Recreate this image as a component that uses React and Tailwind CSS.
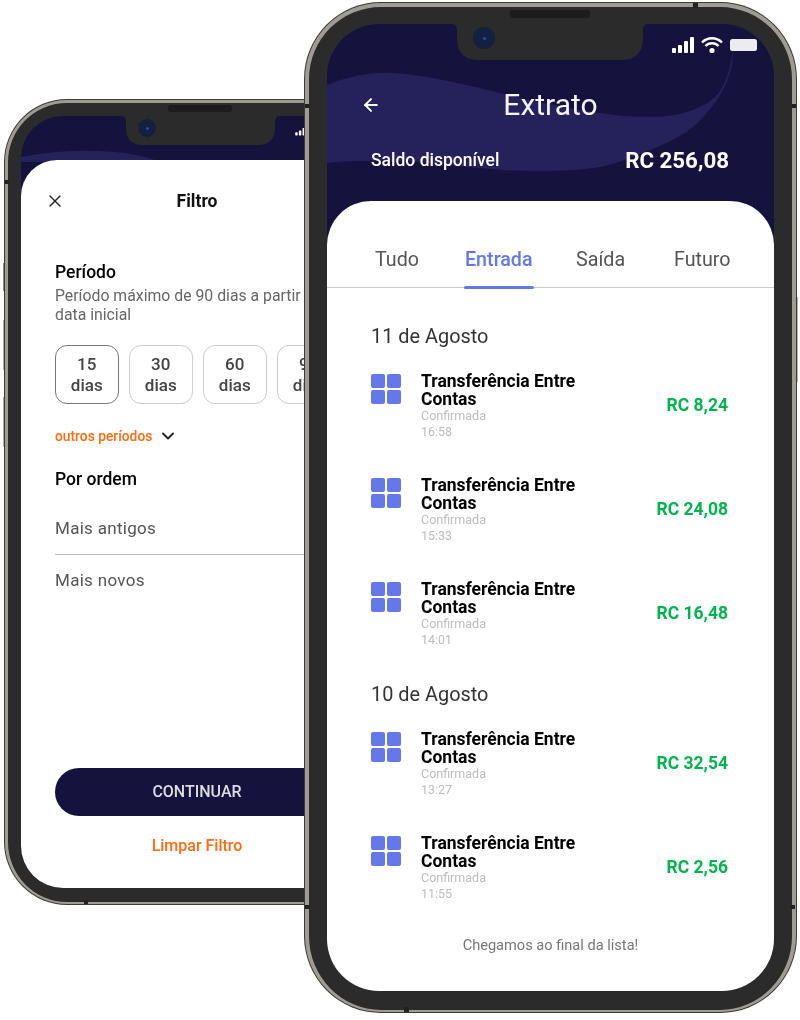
import React from "react";
import { ArrowLeft, X, ChevronDown } from "lucide-react";

function Grid() {
  return (
    <div className="grid grid-cols-2 gap-[2px] w-[30px] h-[30px] shrink-0 mt-[6px]">
      <span className="rounded-[2px] bg-[#6379ea]" />
      <span className="rounded-[2px] bg-[#6379ea]" />
      <span className="rounded-[2px] bg-[#6379ea]" />
      <span className="rounded-[2px] bg-[#6379ea]" />
    </div>
  );
}

function Row({ time, amount }) {
  return (
    <div className="flex h-[104px] pl-[44px] pr-[46px]">
      <Grid />
      <div className="ml-[20px] flex-1 pt-[4px]">
        <div className="text-[17.5px] leading-[18px] font-bold text-black w-[170px]">Transferência Entre Contas</div>
        <div className="text-[12.5px] leading-[16px] text-[#bdbdbd]">Confirmada</div>
        <div className="text-[12.5px] leading-[16px] text-[#bdbdbd]">{time}</div>
      </div>
      <div className="text-[17.5px] font-bold text-[#00b34f] pt-[27px] leading-[20px]">{amount}</div>
    </div>
  );
}

function Wave({ className, d, vb }) {
  return (
    <svg className={className} viewBox={vb} preserveAspectRatio="none">
      <path d={d} fill="#25215b" />
    </svg>
  );
}

function Status({ className }) {
  return (
    <svg className={className} viewBox="0 0 86 18" fill="#fff">
      <rect x="0" y="12" width="4" height="5" rx="1" />
      <rect x="6" y="9" width="4" height="8" rx="1" />
      <rect x="12" y="5" width="4" height="12" rx="1" />
      <rect x="18" y="1" width="4" height="16" rx="1" />
      <path d="M30 6.5a14 14 0 0 1 20 0" fill="none" stroke="#fff" strokeWidth="2.4" />
      <path d="M33.5 10a9 9 0 0 1 13 0" fill="none" stroke="#fff" strokeWidth="2.4" />
      <circle cx="40" cy="14.5" r="2.6" />
      <rect x="58" y="3" width="27" height="12" rx="2.5" fillOpacity="0.92" />
    </svg>
  );
}

function Camera({ className }) {
  return (
    <div className={`absolute rounded-full bg-[#14203f] flex items-center justify-center ${className}`}>
      <span className="w-[3px] h-[3px] rounded-full bg-[#1d4fb0]" />
    </div>
  );
}

export default function App() {
  return (
    <div className="relative w-[800px] h-[1020px] overflow-hidden bg-white font-['Roboto',sans-serif] blur-[0.5px]">
      {/* side buttons */}
      <div className="absolute left-[3px] top-[263px] w-[2px] h-[28px] bg-[#8f8b83]" />
      <div className="absolute left-[3px] top-[320px] w-[2px] h-[50px] bg-[#b5b2ab]" />
      <div className="absolute left-[3px] top-[397px] w-[2px] h-[50px] bg-[#b5b2ab]" />
      <div className="absolute left-[796px] top-[297px] w-[2px] h-[85px] bg-[#b5b2ab]" />

      {/* left phone */}
      <div className="absolute left-[5px] top-[100px] w-[391px] h-[804px] rounded-[62px] bg-[#2b2b2b] border-[3px] border-b-[2px] border-[#a09c94] px-[13px] pt-[13px] pb-[14px] shadow-[0_0_0_1px_#3a3a3a]">
        <div className="relative w-full h-full rounded-[42px] overflow-hidden bg-[#15123e] flex flex-col">
          <Wave className="absolute left-0 top-0 w-full h-[50px]" vb="0 0 359 50" d="M0 41C30 35 70 32 110 38C125 41 135 44 140 46L0 46Z" />
          <svg className="absolute left-[100px] top-0 w-[159px] h-[29px]" viewBox="0 0 159 29">
            <path d="M0 0Q5 0 5 6L5 12Q5 29 22 29L137 29Q154 29 154 12L154 6Q154 0 159 0Z" fill="#2b2b2b" />
          </svg>
          <Camera className="left-[117px] top-[3px] w-[18px] h-[18px]" />
          <Status className="absolute left-[273px] top-[9px] w-[55px] h-[11px]" />
          <div className="relative mt-[44px] flex-1 bg-white rounded-t-[36px] flex flex-col pl-[34px] w-[318px] rounded-tr-none">
            <div className="relative text-center text-[17.5px] font-bold leading-[20px] text-[#111] mt-[31px]">
              <X className="absolute left-[-10px] top-[0px] w-[20px] h-[20px]" strokeWidth={1.6} color="#222" />
              Filtro
            </div>
            <div className="text-[17.5px] font-medium leading-[20px] text-black mt-[51px]">Período</div>
            <div className="text-[15.8px] leading-[19px] text-[#666] w-[290px] mt-[4px]">Período máximo de 90 dias a partir da data inicial</div>
            <div className="flex gap-[10.5px] mt-[21px]">
              {["15", "30", "60", "90"].map((n, i) => (
                <div key={n} className={`w-[63.5px] h-[59px] shrink-0 rounded-[12px] border flex flex-col items-center justify-center text-[17px] leading-[21px] font-medium text-[#444] ${i === 0 ? "border-[#777]" : "border-[#ccc]"}`}>
                  <span>{n}</span>
                  <span>dias</span>
                </div>
              ))}
            </div>
            <div className="flex items-center mt-[22px] h-[20px]">
              <span className="text-[13.8px] font-medium text-[#ff6a13]">outros períodos</span>
              <ChevronDown className="ml-[6px] w-[20px] h-[20px]" strokeWidth={2.2} color="#222" />
            </div>
            <div className="text-[17.5px] font-medium leading-[20px] text-black mt-[23px]">Por ordem</div>
            <div className="text-[17px] leading-[20px] text-[#555] mt-[29px] tracking-[0.3px] pb-[16px] border-b border-[#bbb]">Mais antigos</div>
            <div className="text-[17px] leading-[20px] text-[#555] mt-[15px] tracking-[0.3px]">Mais novos</div>
            <div className="mt-auto h-[48px] rounded-full bg-[#15123e] flex items-center justify-center text-[16px] font-medium text-[#ddd]">CONTINUAR</div>
            <div className="text-center text-[16px] font-medium leading-[20px] text-[#ff6a13] mt-[20px] mb-[32px]">Limpar Filtro</div>
          </div>
        </div>
      </div>
      <div className="absolute left-[168px] top-[105px] w-[64px] h-[7px] rounded-[3px] bg-[#1c1c1c]" />
      <div className="absolute left-[5px] top-[180px] w-[4px] h-[4px] bg-[#222]" />
      <div className="absolute left-[84px] top-[900px] w-[4px] h-[4px] bg-[#222]" />

      {/* right phone */}
      <div className="absolute left-[305px] top-[3px] w-[491px] h-[1009px] rounded-[76px] bg-[#2b2b2b] border-[4px] border-b-[2px] border-[#a09c94] px-[18px] pt-[17px] pb-[19px] shadow-[0_0_0_1px_#3a3a3a]">
        <div className="relative w-full h-full rounded-[52px] overflow-hidden bg-[#15123e] flex flex-col">
          <Wave className="absolute left-0 top-0 w-[448px] h-[177px]" vb="327 24 448 177" d="M327 85C350 76 372 72 393 73C450 76 510 100 600 113C640 119 672 118 693 110C708 104 716 98 722 88C728 76 731 64 733 50C733 64 731 78 717 100C708 112 700 121 693 127C680 137 665 144 650 150C630 158 615 164 600 167C560 173 510 173 433 163C390 160 355 160 327 163Z" />
          <svg className="absolute left-[125px] top-0 w-[196px] h-[36px]" viewBox="0 0 196 36">
            <path d="M0 0Q5 0 5 6L5 14Q5 36 27 36L169 36Q191 36 191 14L191 6Q191 0 196 0Z" fill="#2b2b2b" />
          </svg>
          <Camera className="left-[146px] top-[3px] w-[22px] h-[22px]" />
          <Status className="absolute left-[345px] top-[12px] w-[86px] h-[18px]" />

          <div className="relative h-[177px] shrink-0 text-white">
            <ArrowLeft className="absolute left-[34px] top-[71px] w-[20px] h-[20px]" strokeWidth={2.4} />
            <div className="pt-[63px] text-center text-[30px] leading-[36px] text-[#f4f4f8]">Extrato</div>
            <div className="flex items-center justify-between pl-[44px] pr-[45px] mt-[24px]">
              <span className="text-[17.5px] font-medium leading-[20px]">Saldo disponível</span>
              <span className="text-[22.3px] font-bold leading-[26px]">RC 256,08</span>
            </div>
          </div>

          <div className="relative flex-1 bg-white rounded-t-[44px] flex flex-col">
            <div className="flex items-start pt-[47px] h-[87px] border-b border-[#ccc] pl-[48px] text-[19.7px] leading-[24px] text-[#555] relative">
              <span className="w-[90px]">Tudo</span>
              <span className="w-[111px] text-[#6379ea] font-medium">Entrada</span>
              <span className="w-[98px]">Saída</span>
              <span>Futuro</span>
              <span className="absolute left-[137px] bottom-[-2px] w-[70px] h-[3px] rounded-full bg-[#6379ea]" />
            </div>
            <div className="text-[19.9px] leading-[24px] text-[#333] pl-[44px] mt-[37px] mb-[19px]">11 de Agosto</div>
            <Row time="16:58" amount="RC 8,24" />
            <Row time="15:33" amount="RC 24,08" />
            <Row time="14:01" amount="RC 16,48" />
            <div className="text-[19.9px] leading-[24px] text-[#333] pl-[44px] mt-[3px] mb-[19px]">10 de Agosto</div>
            <Row time="13:27" amount="RC 32,54" />
            <Row time="11:55" amount="RC 2,56" />
            <div className="text-center text-[14.6px] leading-[20px] text-[#777] mt-[1px]">Chegamos ao final da lista!</div>
          </div>
        </div>
      </div>
      <div className="absolute left-[510px] top-[10px] w-[80px] h-[8px] rounded-[3px] bg-[#1c1c1c]" />
      <div className="absolute left-[305px] top-[104px] w-[5px] h-[4px] bg-[#222]" />
      <div className="absolute left-[792px] top-[104px] w-[4px] h-[4px] bg-[#222]" />
      <div className="absolute left-[693px] top-[3px] w-[5px] h-[5px] bg-[#222]" />
      <div className="absolute left-[305px] top-[905px] w-[5px] h-[4px] bg-[#222]" />
      <div className="absolute left-[790px] top-[905px] w-[5px] h-[4px] bg-[#222]" />
      <div className="absolute left-[404px] top-[1007px] w-[5px] h-[5px] bg-[#222]" />
    </div>
  );
}
